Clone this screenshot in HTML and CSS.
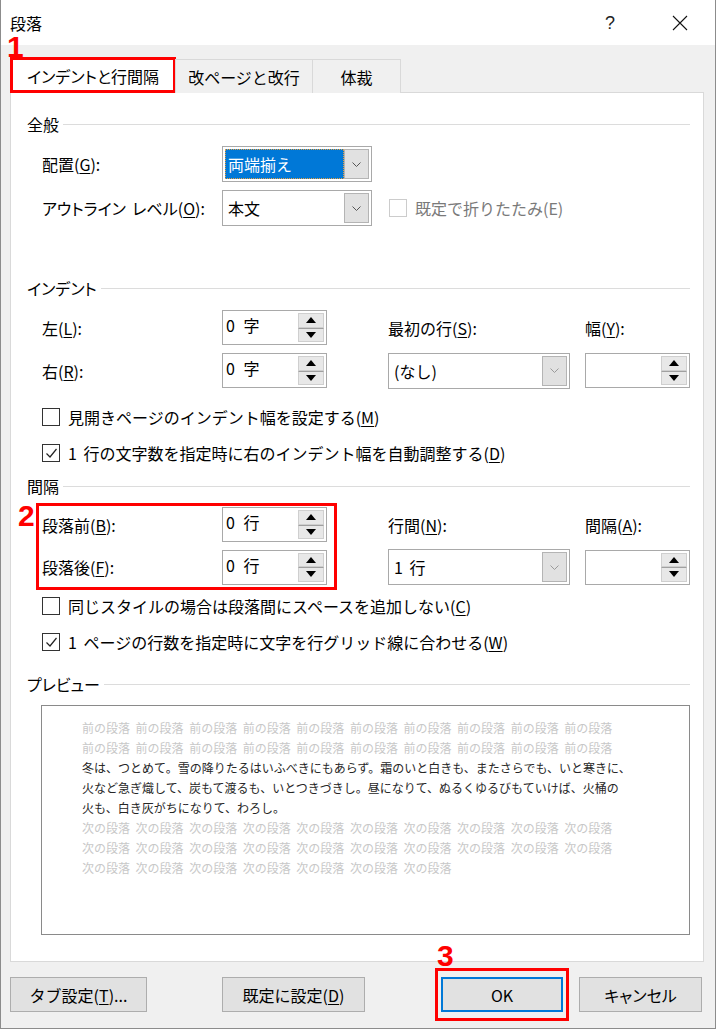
FILE: index.html
```html
<!DOCTYPE html>
<html lang="ja">
<head>
<meta charset="utf-8">
<title>段落</title>
<link rel="stylesheet" href="styles.css">
</head>
<body>
<div class="window">
  <div class="titlebar">
    <span class="title">段落</span>
    <span class="help">?</span>
    <span class="close"><svg width="16" height="16" viewBox="0 0 16 16"><path d="M1 1L15 15M15 1L1 15" stroke="#111" stroke-width="1.1" fill="none"/></svg></span>
  </div>

  <div class="tabs">
    <div class="tab tab1 active"><span class="pk">インデントと行間隔</span></div>
    <div class="tab tab2">改ページと改行</div>
    <div class="tab tab3">体裁</div>
    <span class="mark mark1">1</span>
  </div>

  <div class="panel">
    <div class="ghead"><span>全般</span><i></i></div>
    <div class="grid g-general">
      <div class="lbl">配置(<u>G</u>):</div>
      <div class="combo w150"><span class="val selected">両端揃え</span><span class="drop"><svg width="9" height="5" viewBox="0 0 9 5"><path d="M0.5 0.5L4.5 4.5L8.5 0.5" stroke="#555" fill="none"/></svg></span></div>
      <div></div>
      <div></div>
      <div class="lbl"><span class="pk">アウトライン レベル</span>(<u>O</u>):</div>
      <div class="combo w150"><span class="val">本文</span><span class="drop"><svg width="9" height="5" viewBox="0 0 9 5"><path d="M0.5 0.5L4.5 4.5L8.5 0.5" stroke="#555" fill="none"/></svg></span></div>
      <div class="chk disabled span2"><span class="box"></span><span>既定で折りたたみ(E)</span></div>
    </div>

    <div class="ghead h-indent"><span class="pk">インデント</span><i></i></div>
    <div class="grid g-indent">
      <div class="lbl">左(<u>L</u>):</div>
      <div class="spin"><span class="sval">0 字</span><span class="sbtns"><span class="up"><b></b></span><span class="dn"><b></b></span></span></div>
      <div class="lbl">最初の行(<u>S</u>):</div>
      <div class="lbl">幅(<u>Y</u>):</div>
      <div class="lbl">右(<u>R</u>):</div>
      <div class="spin"><span class="sval">0 字</span><span class="sbtns"><span class="up"><b></b></span><span class="dn"><b></b></span></span></div>
      <div class="combo w182"><span class="val">(なし)</span><span class="drop"><svg width="9" height="5" viewBox="0 0 9 5"><path d="M0.5 0.5L4.5 4.5L8.5 0.5" stroke="#9a9a9a" fill="none"/></svg></span></div>
      <div class="spin"><span class="sval"></span><span class="sbtns"><span class="up"><b></b></span><span class="dn"><b></b></span></span></div>
    </div>

    <div class="chk row c1"><span class="box"></span><span>見開きページのインデント幅を設定する(<u>M</u>)</span></div>
    <div class="chk row c2"><span class="box"><svg width="15" height="15" viewBox="0 0 15 15"><path d="M2.5 7.5L6 11L12.5 3" stroke="#222" stroke-width="1.2" fill="none"/></svg></span><span>1 行の文字数を指定時に右のインデント幅を自動調整する(<u>D</u>)</span></div>

    <div class="ghead h-space"><span>間隔</span><i></i></div>
    <div class="grid g-space">
      <span class="mark mark2">2</span>
      <span class="redbox"></span>
      <div class="lbl">段落前(<u>B</u>):</div>
      <div class="spin"><span class="sval">0 行</span><span class="sbtns"><span class="up"><b></b></span><span class="dn"><b></b></span></span></div>
      <div class="lbl">行間(<u>N</u>):</div>
      <div class="lbl">間隔(<u>A</u>):</div>
      <div class="lbl">段落後(<u>F</u>):</div>
      <div class="spin"><span class="sval">0 行</span><span class="sbtns"><span class="up"><b></b></span><span class="dn"><b></b></span></span></div>
      <div class="combo w182"><span class="val">1 行</span><span class="drop"><svg width="9" height="5" viewBox="0 0 9 5"><path d="M0.5 0.5L4.5 4.5L8.5 0.5" stroke="#9a9a9a" fill="none"/></svg></span></div>
      <div class="spin"><span class="sval"></span><span class="sbtns"><span class="up"><b></b></span><span class="dn"><b></b></span></span></div>
    </div>

    <div class="chk row c3"><span class="box"></span><span>同じスタイルの場合は段落間にスペースを追加しない(<u>C</u>)</span></div>
    <div class="chk row c4"><span class="box"><svg width="15" height="15" viewBox="0 0 15 15"><path d="M2.5 7.5L6 11L12.5 3" stroke="#222" stroke-width="1.2" fill="none"/></svg></span><span>1 ページの行数を指定時に文字を行グリッド線に合わせる(<u>W</u>)</span></div>

    <div class="ghead h-preview"><span class="pk">プレビュー</span><i></i></div>
    <div class="preview">
      <div class="pl ghost">前の段落 前の段落 前の段落 前の段落 前の段落 前の段落 前の段落 前の段落 前の段落 前の段落</div>
      <div class="pl ghost">前の段落 前の段落 前の段落 前の段落 前の段落 前の段落 前の段落 前の段落 前の段落 前の段落</div>
      <div class="pl main">冬は、つとめて。雪の降りたるはいふべきにもあらず。霜のいと白きも、またさらでも、いと寒きに、</div>
      <div class="pl main">火など急ぎ熾して、炭もて渡るも、いとつきづきし。昼になりて、ぬるくゆるびもていけば、火桶の</div>
      <div class="pl main">火も、白き灰がちになりて、わろし。</div>
      <div class="pl ghost">次の段落 次の段落 次の段落 次の段落 次の段落 次の段落 次の段落 次の段落 次の段落 次の段落</div>
      <div class="pl ghost">次の段落 次の段落 次の段落 次の段落 次の段落 次の段落 次の段落 次の段落 次の段落 次の段落</div>
      <div class="pl ghost">次の段落 次の段落 次の段落 次の段落 次の段落 次の段落 次の段落</div>
    </div>
  </div>

  <div class="buttons">
    <button class="btn b-tab">タブ設定(<u>T</u>)...</button>
    <button class="btn b-def">既定に設定(<u>D</u>)</button>
    <span class="okwrap"><span class="mark mark3">3</span><button class="btn b-ok">OK</button></span>
    <button class="btn b-cancel"><span class="pk">キャンセル</span></button>
  </div>
</div>
</body>
</html>
```

FILE: styles.css
```css
* { box-sizing: border-box; }
html, body { margin: 0; padding: 0; }
body {
  width: 716px;
  height: 1029px;
  overflow: hidden;
  background: #fff;
  font-family: "Noto Sans CJK JP", "Noto Sans", sans-serif;
  font-size: 16px;
  color: #000;
  word-spacing: 3px;
}
u { text-decoration: underline; text-underline-offset: 2px; text-decoration-thickness: 1px; }
.pk { font-feature-settings: "palt"; }

.window {
  position: relative;
  width: 716px;
  height: 1029px;
  background: #f0f0f0;
  border: 1px solid #8c8c8c;
  border-top: none;
  display: flex;
  flex-direction: column;
}

/* title bar */
.titlebar {
  flex: none;
  height: 45px;
  background: #fff;
  display: flex;
  align-items: center;
  padding-left: 9px;
}
.title { flex: 1; font-size: 16px; line-height: 14px; }
.help { width: 46px; text-align: center; margin-right: 24px; font-size: 18px; line-height: 16px; color: #222; font-family: "Liberation Sans", Arial, sans-serif; }
.close { width: 46px; height: 16px; display: flex; justify-content: center; margin-right: 12px; }

/* tabs */
.tabs {
  flex: none;
  position: relative;
  z-index: 1;
  display: flex;
  align-items: flex-end;
  margin-top: 12px;
  margin-bottom: -1px;
  padding-left: 9px;
  height: 36px;
}
.tab {
  height: 34px;
  border: 1px solid #d9d9d9;
  border-bottom: none;
  background: #f0f0f0;
  display: flex;
  align-items: center;
  justify-content: center;
  margin-right: -1px;
  font-size: 16px;
}
.tab1 { width: 166px; }
.tab2 { width: 138px; }
.tab3 { width: 89px; }
.tab.active {
  height: 36px;
  background: #fff;
  outline: 3px solid #f00;
  outline-offset: -3px;
  padding-top: 1px;
}

.mark {
  position: absolute;
  color: #f00;
  font-family: "Liberation Sans", Arial, sans-serif;
  font-weight: bold;
  font-size: 30px;
  line-height: 20px;
  word-spacing: 0;
}
.mark1 { left: 6px; top: -20px; }

/* panel */
.panel {
  flex: none;
  width: 694px;
  height: 870px;
  margin-left: 9px;
  background: #fff;
  border: 1px solid #d9d9d9;
  padding: 21px 13px 0 16px;
}

.ghead {
  display: flex;
  align-items: center;
  height: 20px;
  gap: 4px;
  line-height: 20px;
}
.ghead i { flex: 1; height: 1px; background: #dcdcdc; }
.h-indent { margin-top: 52px; }
.h-space { margin-top: 14px; }
.h-preview { margin-top: 23px; }

.grid {
  display: grid;
  grid-template-columns: 180px 166px 197px 105px;
  padding-left: 15px;
  align-items: center;
}
.g-general { margin-top: 12px; grid-template-rows: 36px 36px; row-gap: 8px; }
.g-indent { margin-top: 12px; grid-template-rows: 35px 35px; row-gap: 8px; }
.g-space { margin-top: 11px; grid-template-rows: 35px 36px; row-gap: 7px; position: relative; }
.span2 { grid-column: span 2; margin-left: 1px; }

.lbl { line-height: 20px; white-space: nowrap; }

/* combo */
.combo {
  height: 36px;
  border: 1px solid #a9a9a9;
  background: #fff;
  display: flex;
  padding: 2px;
}
.w150 { width: 150px; }
.w182 { width: 182px; }
.combo .val {
  flex: 1;
  display: flex;
  align-items: center;
  padding-left: 3px;
  line-height: 20px;
  white-space: pre;
}
.combo .val.selected {
  background: #0078d7;
  color: #fff;
  outline: 1px dotted #e8a040;
  outline-offset: -1px;
}
.combo .drop {
  width: 25px;
  background: #e1e1e1;
  border: 1px solid #b4b4b4;
  display: flex;
  align-items: center;
  justify-content: center;
}

/* spin */
.spin {
  width: 105px;
  height: 35px;
  border: 1px solid #a9a9a9;
  background: #fff;
  display: flex;
  padding: 2px 2px 2px 0;
}
.spin .sval { flex: 1; padding-left: 3px; line-height: 22px; padding-top: 1px; word-spacing: 5px; }
.sbtns { width: 26px; display: flex; flex-direction: column; }
.sbtns .up, .sbtns .dn {
  flex: 1;
  background: #e8e8e8;
  border: 1px solid #cfcfcf;
  display: flex;
  align-items: center;
  justify-content: center;
}
.sbtns .dn { border-top: 1px solid #a0a0a0; }
.sbtns .up b {
  width: 0; height: 0;
  border-left: 5px solid transparent;
  border-right: 5px solid transparent;
  border-bottom: 6px solid #000;
}
.sbtns .dn b {
  width: 0; height: 0;
  border-left: 5px solid transparent;
  border-right: 5px solid transparent;
  border-top: 6px solid #000;
}

/* checkboxes */
.chk { display: flex; align-items: center; height: 18px; line-height: 20px; white-space: nowrap; }
.chk.row { padding-left: 15px; }
.chk .box {
  width: 18px;
  height: 18px;
  border: 1px solid #333;
  background: #fff;
  margin-right: 8px;
  flex: none;
  display: flex;
  align-items: center;
  justify-content: center;
}
.chk.disabled { color: #7a7a7a; }
.chk.disabled .box { border-color: #cccccc; }
.c1 { margin-top: 20px; }
.c2 { margin-top: 18px; }
.c3 { margin-top: 12px; }
.c4 { margin-top: 18px; }

.redbox {
  position: absolute;
  left: 9px;
  top: -4px;
  width: 301px;
  height: 87px;
  border: 3px solid #f00;
  pointer-events: none;
}
.mark2 { left: -9px; top: -1px; }

/* preview */
.preview {
  margin-top: 11px;
  margin-left: 14px;
  width: 649px;
  height: 230px;
  border: 1px solid #8a8a8a;
  padding: 12px 0 0 40px;
  font-size: 12px;
  line-height: 20px;
  word-spacing: 0;
}
.pl { white-space: nowrap; }
.pl.ghost { color: #c8c8c8; word-spacing: 2.9px; }
.pl.main { color: #262626; }

/* buttons */
.buttons {
  flex: none;
  margin-top: 15px;
  padding-left: 9px;
  height: 35px;
  display: flex;
  align-items: center;
}
.btn {
  height: 35px;
  background: #e1e1e1;
  border: 1px solid #adadad;
  font-family: inherit;
  font-size: 16px;
  color: #000;
  padding: 0;
  display: flex;
  align-items: center;
  justify-content: center;
}
.b-tab { width: 137px; }
.b-def { width: 143px; margin-left: 75px; }
.okwrap {
  position: relative;
  margin-left: 70px;
  border: 3px solid #f00;
  padding: 6px 3px;
  margin-right: 10px;
}
.b-ok { width: 122px; border: 2px solid #0078d7; }
.b-cancel { width: 123px; }
.mark3 { left: -1px; top: -25px; }
```
